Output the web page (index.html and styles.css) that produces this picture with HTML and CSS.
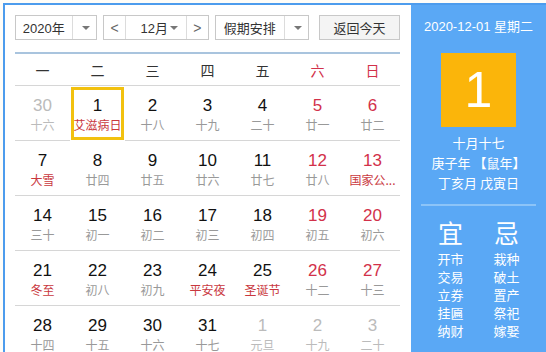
FILE: index.html
```html
<!DOCTYPE html>
<html lang="zh-CN">
<head>
    <meta charset="UTF-8">
    <title>万年历</title>
    <link rel="stylesheet" href="styles.css">
</head>
<body>

<div class="calendar">
    <div class="main">
        <div class="toolbar">
            <div class="select year-select">
                <span class="select-text">2020年</span>
                <span class="select-arrow"></span>
            </div>
            <div class="select month-select">
                <span class="nav-btn">&lt;</span>
                <span class="select-text">12月</span>
                <span class="select-arrow plain"></span>
                <span class="nav-btn right">&gt;</span>
            </div>
            <div class="select holiday-select">
                <span class="select-text">假期安排</span>
                <span class="select-arrow"></span>
            </div>
            <button class="today-btn">返回今天</button>
        </div>

        <div class="weekdays">
            <span>一</span><span>二</span><span>三</span><span>四</span><span>五</span>
            <span class="weekend">六</span><span class="weekend">日</span>
        </div>

        <div class="days" id="days"></div>
    </div>

    <div class="side">
        <div class="side-date">2020-12-01 星期二</div>
        <div class="big-day">1</div>
        <div class="lunar-info">
            <p>十月十七</p>
            <p>庚子年 【鼠年】</p>
            <p>丁亥月 戊寅日</p>
        </div>
        <div class="almanac">
            <div class="almanac-col">
                <div class="almanac-title">宜</div>
                <p>开市</p><p>交易</p><p>立券</p><p>挂匾</p><p>纳财</p>
            </div>
            <div class="almanac-col">
                <div class="almanac-title">忌</div>
                <p>栽种</p><p>破土</p><p>置产</p><p>祭祀</p><p>嫁娶</p>
            </div>
        </div>
    </div>
</div>

<script>
    // day, lunar text, flags: o = other month, w = weekend, f = festival, s = selected
    const days = [
        ['30', '十六', 'o'], ['1', '艾滋病日', 'fs'], ['2', '十八', ''], ['3', '十九', ''], ['4', '二十', ''], ['5', '廿一', 'w'], ['6', '廿二', 'w'],
        ['7', '大雪', 'f'], ['8', '廿四', ''], ['9', '廿五', ''], ['10', '廿六', ''], ['11', '廿七', ''], ['12', '廿八', 'w'], ['13', '国家公...', 'wf'],
        ['14', '三十', ''], ['15', '初一', ''], ['16', '初二', ''], ['17', '初三', ''], ['18', '初四', ''], ['19', '初五', 'w'], ['20', '初六', 'w'],
        ['21', '冬至', 'f'], ['22', '初八', ''], ['23', '初九', ''], ['24', '平安夜', 'f'], ['25', '圣诞节', 'f'], ['26', '十二', 'w'], ['27', '十三', 'w'],
        ['28', '十四', ''], ['29', '十五', ''], ['30', '十六', ''], ['31', '十七', ''], ['1', '元旦', 'o'], ['2', '十九', 'o'], ['3', '二十', 'o']
    ];

    const daysElement = document.getElementById('days');

    days.forEach(([num, lunar, flags]) => {
        const cell = document.createElement('div');
        cell.className = 'day';
        if (flags.includes('o')) cell.classList.add('other');
        if (flags.includes('w')) cell.classList.add('weekend');
        if (flags.includes('f')) cell.classList.add('festival');
        if (flags.includes('s')) cell.classList.add('selected');
        cell.innerHTML = `<span class="num">${num}</span><span class="lunar">${lunar}</span>`;
        daysElement.appendChild(cell);
    });
</script>

</body>
</html>
```

FILE: styles.css
```css
body {
    margin: 0;
    font-family: "Liberation Sans", "Noto Sans CJK SC", sans-serif;
    background-color: #fffdf8;
    color: #333;
}

.calendar {
    display: flex;
    margin: 3px 0 0 3px;
    border-top: 2px solid #4d9ced;
    border-left: 2px solid #4d9ced;
    height: 347px;
    overflow: hidden;
}

.main {
    width: 385px;
    padding: 10px 11px 0 10px;
    background-color: #fff;
}

.toolbar {
    display: flex;
    height: 25px;
    padding-bottom: 12px;
    border-bottom: 2px solid #a9c4de;
}

.select {
    display: flex;
    align-items: stretch;
    border: 1px solid #c8c8c8;
    background-color: #fff;
    font-size: 13px;
    color: #333;
    box-sizing: border-box;
    height: 25px;
}

.select-text {
    display: flex;
    align-items: center;
    justify-content: center;
}

.select-arrow {
    position: relative;
    width: 24px;
    border-left: 1px solid #dcdcdc;
}

.select-arrow::after {
    content: "";
    position: absolute;
    left: 9px;
    top: 10px;
    border-left: 4px solid transparent;
    border-right: 4px solid transparent;
    border-top: 4px solid #777;
}

.select-arrow.plain {
    border-left: none;
    width: 16px;
}

.select-arrow.plain::after {
    left: 2px;
}

.year-select {
    width: 82px;
}

.year-select .select-text {
    width: 57px;
}

.month-select {
    width: 107px;
    margin-left: 6px;
}

.month-select .select-text {
    width: 42px;
    justify-content: flex-end;
}

.nav-btn {
    display: flex;
    align-items: center;
    justify-content: center;
    width: 21px;
    border-right: 1px solid #dcdcdc;
    color: #666;
    font-size: 14px;
}

.nav-btn.right {
    border-right: none;
    border-left: 1px solid #dcdcdc;
    margin-left: auto;
}

.holiday-select {
    width: 94px;
    margin-left: 6px;
}

.holiday-select .select-text {
    width: 70px;
}

.today-btn {
    margin-left: 10px;
    width: 82px;
    height: 25px;
    border: 1px solid #c8c8c8;
    background-color: #f4f4f4;
    font-family: "Liberation Sans", "Noto Sans CJK SC", sans-serif;
    font-size: 13px;
    color: #333;
    padding: 0;
}

.weekdays {
    display: grid;
    grid-template-columns: repeat(7, 55px);
    height: 31px;
    align-items: center;
    border-bottom: 1px solid #d6d6d6;
    font-family: "Noto Sans CJK SC", sans-serif;
    font-size: 14px;
    text-align: center;
    color: #333;
}

.weekdays .weekend {
    color: #d2314a;
}

.days {
    display: grid;
    grid-template-columns: repeat(7, 55px);
    grid-auto-rows: 55px;
}

.day {
    display: flex;
    flex-direction: column;
    align-items: center;
    padding-top: 10px;
    box-sizing: border-box;
    border-bottom: 1px solid #d6d6d6;
    height: 55px;
}

.num {
    font-size: 17px;
    line-height: 20px;
    color: #111;
}

.lunar {
    font-family: "Noto Sans CJK SC", sans-serif;
    font-size: 12px;
    line-height: 16px;
    margin-top: 1px;
    color: #999;
    white-space: nowrap;
}

.day.weekend .num {
    color: #d2314a;
}

.day.festival .lunar {
    color: #c9383e;
}

.day.other .num,
.day.other .lunar {
    color: #bbb;
}

.day.selected {
    border: 3px solid #f2c10f;
    margin: 1px 1px 1px 1px;
    height: 53px;
    padding-top: 6px;
}

.side {
    flex: 1;
    background-color: #5aa8f5;
    color: #fff;
    text-align: center;
    font-family: "Noto Sans CJK SC", sans-serif;
}

.side-date {
    font-family: "Liberation Sans", "Noto Sans CJK SC", sans-serif;
    font-size: 13px;
    margin-top: 13px;
    line-height: 18px;
}

.big-day {
    width: 75px;
    height: 74px;
    margin: 17px auto 0;
    background-color: #fbb50a;
    font-family: "Liberation Sans", sans-serif;
    font-size: 50px;
    line-height: 74px;
}

.lunar-info {
    margin: 6px 10px 0;
    padding-bottom: 11px;
    border-bottom: 2px solid #8cc4f8;
    font-size: 13px;
    line-height: 20px;
}

.lunar-info p {
    margin: 0;
}

.almanac {
    display: flex;
    justify-content: center;
    gap: 30px;
    margin-top: 10px;
}

.almanac-col p {
    margin: 0;
    font-size: 13px;
    line-height: 18px;
}

.almanac-title {
    font-size: 25px;
    line-height: 32px;
    margin-bottom: 2px;
}
```
